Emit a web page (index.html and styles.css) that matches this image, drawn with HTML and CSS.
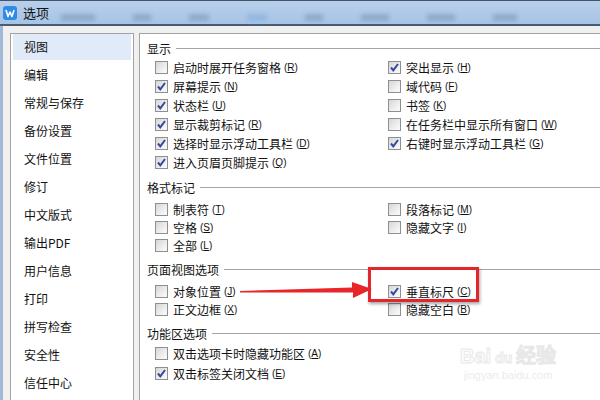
FILE: index.html
```html
<!DOCTYPE html>
<html lang="zh-CN">
<head>
    <meta charset="UTF-8">
    <title>选项</title>
    <link rel="stylesheet" href="styles.css">
</head>
<body>
    <div class="titlebar">
        <span class="app-icon">
            <svg width="14" height="14" viewBox="0 0 14 14">
                <rect x="0" y="0" width="14" height="14" rx="3" fill="#2f8be6"/>
                <path d="M3 4 L5 10.5 L7 6 L9 10.5 L11 4" fill="none" stroke="#fff" stroke-width="1.6" stroke-linejoin="round"/>
            </svg>
        </span>
        <span class="title">选项</span>
        <div class="blur-tabs">
            <span style="width:34px"></span>
            <span style="width:18px"></span>
            <span style="width:20px"></span>
            <span class="active" style="width:20px"></span>
            <span style="width:18px"></span>
            <span style="width:28px"></span>
            <span style="width:28px"></span>
            <span style="width:24px"></span>
        </div>
    </div>

    <div class="window">
        <ul class="nav">
            <li class="selected">视图</li>
            <li>编辑</li>
            <li>常规与保存</li>
            <li>备份设置</li>
            <li>文件位置</li>
            <li>修订</li>
            <li>中文版式</li>
            <li>输出PDF</li>
            <li>用户信息</li>
            <li>打印</li>
            <li>拼写检查</li>
            <li>安全性</li>
            <li>信任中心</li>
        </ul>

        <div class="content">
            <div class="group-title first">显示</div>
            <div class="options rows-19">
                <label class="opt"><span class="box"></span>启动时展开任务窗格 <span class="key">(<u>R</u>)</span></label>
                <label class="opt"><span class="box checked"></span>突出显示 <span class="key">(<u>H</u>)</span></label>
                <label class="opt"><span class="box checked"></span>屏幕提示 <span class="key">(<u>N</u>)</span></label>
                <label class="opt"><span class="box"></span>域代码 <span class="key">(<u>F</u>)</span></label>
                <label class="opt"><span class="box checked"></span>状态栏 <span class="key">(<u>U</u>)</span></label>
                <label class="opt"><span class="box"></span>书签 <span class="key">(<u>K</u>)</span></label>
                <label class="opt"><span class="box checked"></span>显示裁剪标记 <span class="key">(<u>R</u>)</span></label>
                <label class="opt"><span class="box"></span>在任务栏中显示所有窗口 <span class="key">(<u>W</u>)</span></label>
                <label class="opt"><span class="box checked"></span>选择时显示浮动工具栏 <span class="key">(<u>D</u>)</span></label>
                <label class="opt"><span class="box checked"></span>右键时显示浮动工具栏 <span class="key">(<u>G</u>)</span></label>
                <label class="opt"><span class="box checked"></span>进入页眉页脚提示 <span class="key">(<u>Q</u>)</span></label>
            </div>

            <div class="group-title">格式标记</div>
            <div class="options rows-18">
                <label class="opt"><span class="box"></span>制表符 <span class="key">(<u>T</u>)</span></label>
                <label class="opt"><span class="box"></span>段落标记 <span class="key">(<u>M</u>)</span></label>
                <label class="opt"><span class="box"></span>空格 <span class="key">(<u>S</u>)</span></label>
                <label class="opt"><span class="box"></span>隐藏文字 <span class="key">(<u>I</u>)</span></label>
                <label class="opt"><span class="box"></span>全部 <span class="key">(<u>L</u>)</span></label>
            </div>

            <div class="group-title">页面视图选项</div>
            <div class="options rows-18">
                <label class="opt"><span class="box"></span>对象位置 <span class="key">(<u>J</u>)</span></label>
                <label class="opt"><span class="box checked"></span>垂直标尺 <span class="key">(<u>C</u>)</span></label>
                <label class="opt"><span class="box"></span>正文边框 <span class="key">(<u>X</u>)</span></label>
                <label class="opt"><span class="box"></span>隐藏空白 <span class="key">(<u>B</u>)</span></label>
            </div>

            <div class="group-title">功能区选项</div>
            <div class="options single rows-20">
                <label class="opt"><span class="box"></span>双击选项卡时隐藏功能区 <span class="key">(<u>A</u>)</span></label>
                <label class="opt"><span class="box checked"></span>双击标签关闭文档 <span class="key">(<u>E</u>)</span></label>
            </div>
        </div>
    </div>

    <!-- annotation drawn over the dialog -->
    <svg class="arrow" width="140" height="24" viewBox="0 0 140 24">
        <polygon points="0,13 112,9.5 112,4 132,11 113,20 113,14.5 0,14.5" fill="#e8262a"/>
    </svg>
    <div class="highlight-box"></div>

    <div class="watermark">
        <div class="wm-logo">Bai<span class="wm-du">du</span>经验</div>
        <div class="wm-url">jingyan.baidu.com</div>
    </div>

    <script>
        // draw the check marks into every checked box
        document.querySelectorAll('.box.checked').forEach(box => {
            box.innerHTML = '<svg width="11" height="11" viewBox="0 0 11 11"><path d="M2 5.5 L4.3 8.3 L9 2" fill="none" stroke="#34489e" stroke-width="2"/></svg>';
        });
    </script>
</body>
</html>
```

FILE: styles.css
```css
body {
    margin: 0;
    width: 600px;
    height: 400px;
    overflow: hidden;
    position: relative;
    background: #f0f0f0;
    font-family: "Noto Sans CJK SC", "Liberation Sans", sans-serif;
    color: #111;
}

.titlebar {
    display: flex;
    align-items: center;
    height: 26px;
    box-sizing: border-box;
    background: linear-gradient(#b7cfea, #a7c4e6);
    border-top: 1px solid #46546a;
    border-bottom: 2px solid #4a5b74;
}

.app-icon {
    display: flex;
    margin-left: 3px;
}

.title {
    margin-left: 6px;
    font-size: 13px;
}

.blur-tabs {
    display: flex;
    margin-left: 12px;
    gap: 38px;
    filter: blur(2px);
}

.blur-tabs span {
    height: 7px;
    margin-top: 10px;
    background: #6d87a8;
    opacity: 0.45;
}

.blur-tabs span.active {
    background: #8fb6e0;
    opacity: 0.9;
}

.window {
    display: flex;
    height: 374px;
    padding-top: 7px;
    box-sizing: border-box;
    border-left: 3px solid #9fb9d6;
}

.nav {
    list-style: none;
    margin: 0 5px 0 7px;
    padding: 0 2px;
    width: 118px;
    background: #fff;
    border: 1px solid #a3a3a3;
    border-bottom: none;
    font-size: 12px;
}

.nav li {
    height: 26px;
    line-height: 26px;
    margin-bottom: 2px;
    padding-left: 11px;
}

.nav li.selected {
    background: #e0eaf8;
}

.content {
    flex: 1;
    background: #fff;
    border-left: 1px solid #a3a3a3;
    border-top: 1px solid #a3a3a3;
    padding-left: 7px;
    font-size: 12px;
}

.group-title {
    display: flex;
    align-items: center;
    height: 20px;
    margin-top: 5px;
}

.group-title.first {
    margin-top: 4px;
}

.group-title::after {
    content: "";
    flex: 1;
    margin-left: 5px;
    border-top: 1px solid #a5a5a5;
}

.options {
    display: grid;
    grid-template-columns: 233px 1fr;
    padding-left: 8px;
}

.options.single {
    grid-template-columns: 1fr;
}

.rows-18 {
    margin-top: 3px;
}

.rows-19 .opt { height: 19px; }
.rows-18 .opt { height: 18px; }
.rows-20 .opt { height: 20px; }

.opt {
    display: flex;
    align-items: center;
    white-space: nowrap;
}

.box {
    width: 11px;
    height: 11px;
    margin-right: 5px;
    border: 1px solid #8e8f8f;
    background: linear-gradient(135deg, #d6d6d6, #f6f6f6 80%);
    display: flex;
    align-items: center;
    justify-content: center;
}

.key {
    margin-left: 3px;
    font-family: "Liberation Sans", sans-serif;
    font-size: 10px;
}

.arrow {
    position: absolute;
    left: 240px;
    top: 278px;
}

.highlight-box {
    position: absolute;
    left: 368px;
    top: 267px;
    width: 105px;
    height: 29px;
    border: 3px solid #e3262b;
    box-shadow: 1px 2px 3px rgba(0, 0, 0, 0.35);
}

.watermark {
    position: absolute;
    left: 460px;
    top: 340px;
    font-family: "Liberation Sans", sans-serif;
    text-align: center;
}

.wm-logo {
    font-size: 20px;
    font-weight: bold;
    color: transparent;
    -webkit-text-stroke: 1px #e8e8e8;
}

.wm-du {
    font-size: 14px;
    margin: 0 4px;
}

.wm-url {
    font-size: 11px;
    color: #ebebeb;
}
```
